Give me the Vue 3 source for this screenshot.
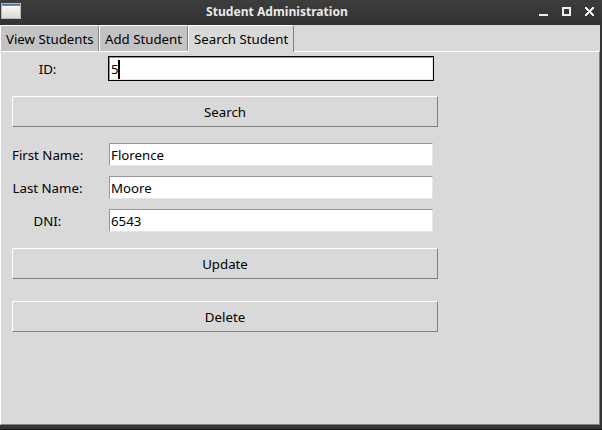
<script setup>
import { ref } from 'vue'

const tabs = [
  { id: 'view', label: 'View Students' },
  { id: 'add', label: 'Add Student' },
  { id: 'search', label: 'Search Student' },
]
const active = ref('search')
const id = ref('5')
const fields = ref([
  { label: 'First Name:', value: 'Florence' },
  { label: 'Last Name:', value: 'Moore' },
  { label: 'DNI:', value: '6543' },
])
</script>

<template>
  <div class="window">
    <header class="titlebar">
      <svg class="app-icon" width="20" height="16" viewBox="0 0 20 16" shape-rendering="crispEdges">
        <defs>
          <linearGradient id="sheet" x1="0" y1="0" x2="0" y2="1">
            <stop offset="0" stop-color="#fdfdfd" />
            <stop offset="1" stop-color="#d9dbd5" />
          </linearGradient>
        </defs>
        <rect width="20" height="16" fill="#b9bbb6" />
        <rect x="1" y="1" width="18" height="14" fill="url(#sheet)" />
        <rect x="1" y="1" width="18" height="1" fill="#4a6ea6" />
        <rect x="1" y="2" width="18" height="1" fill="#6a8cc0" />
      </svg>
      <h1 class="title">Student Administration</h1>
      <div class="controls">
        <svg width="9" height="9" viewBox="0 0 9 9" shape-rendering="crispEdges"><path d="M0 7h9v2H0z" fill="#eee" /></svg>
        <svg width="9" height="9" viewBox="0 0 9 9" shape-rendering="crispEdges"><path d="M1 1h7v7H1z" fill="none" stroke="#eee" stroke-width="2" /></svg>
        <svg width="9" height="9" viewBox="0 0 9 9" shape-rendering="crispEdges"><path d="M0 0h2v1h1v1h1v1h1V2h1V1h1V0h2v2H8v1H7v1H6v1h1v1h1v1h1v2H7V8H6V7H5V6H4v1H3v1H2v1H0V7h1V6h1V5h1V4H2V3H1V2H0z" fill="#eee" /></svg>
      </div>
    </header>

    <main class="body">
      <nav class="tabs">
        <button
          v-for="t in tabs"
          :key="t.id"
          :class="['tab', t.id, { active: t.id === active }]"
          @click="active = t.id"
        >{{ t.label }}</button>
      </nav>

      <section class="pane">
        <div class="row id-row">
          <span class="label">ID:</span>
          <div class="entry focused">{{ id }}<i class="caret"></i></div>
        </div>
        <button class="action search-btn">Search</button>
        <div class="details">
          <div v-for="f in fields" :key="f.label" class="row">
            <span class="label">{{ f.label }}</span>
            <div class="entry">{{ f.value }}</div>
          </div>
        </div>
        <button class="action update-btn">Update</button>
        <button class="action delete-btn">Delete</button>
      </section>
    </main>
  </div>
</template>

<style>
body {
  margin: 0;
  overflow: hidden;
}
</style>

<style scoped>
.window {
  box-sizing: border-box;
  display: flex;
  flex-direction: column;
  width: 602px;
  height: 430px;
  padding: 0 2px 4px 0;
  border-bottom: 1px solid #141214;
  background: #333434;
  font: 13.25px/18px "Noto Sans", sans-serif;
  color: #000;
}
.titlebar {
  display: flex;
  align-items: flex-start;
  flex: none;
  height: 25px;
  margin-right: -2px;
  background: linear-gradient(#3d3d3d, #323232);
}
.app-icon {
  margin: 3px 0 0 1px;
}
.title {
  flex: 1;
  margin: 3px 0 0;
  padding-right: 6px;
  font-size: 12.1px;
  line-height: 17px;
  font-weight: 700;
  text-align: center;
  color: #e8e8e8;
}
.controls {
  display: flex;
  gap: 14px;
  padding: 7px 8px 0 0;
}
.body {
  display: flex;
  flex: 1;
  flex-direction: column;
  background: #d9d9d9;
}
.tabs {
  display: flex;
  height: 26px;
}
.tab {
  box-sizing: border-box;
  height: 26px;
  padding: 0 0 0 5px;
  border: 1px solid #fff;
  border-right-color: #828282;
  border-bottom: 0;
  border-radius: 2px 3px 0 0;
  background: #c3c3c3;
  font: inherit;
  color: inherit;
  text-align: left;
  white-space: nowrap;
}
.tab.view {
  width: 99px;
}
.tab.add {
  width: 89px;
}
.tab.search {
  width: 106px;
}
.tab.active {
  z-index: 1;
  height: 27px;
  padding-bottom: 1px;
  background: #d9d9d9;
}
.pane {
  box-sizing: border-box;
  flex: 1;
  padding: 4px 0 0 11px;
  border: 1px solid #828282;
  border-top-color: #fff;
  border-left-color: #fff;
}
.row {
  display: flex;
  align-items: center;
  width: 422px;
}
.label {
  width: 71px;
  margin-right: 26px;
  text-align: center;
  white-space: nowrap;
}
.entry {
  box-sizing: border-box;
  display: flex;
  align-items: center;
  width: 324px;
  height: 23px;
  padding: 1px 0 0 1px;
  border: 1px solid #e6e6e6;
  border-top-color: #969696;
  border-left-color: #969696;
  background: #fff;
}
.id-row {
  height: 25px;
}
.focused {
  outline: 1px solid #000;
}
.caret {
  width: 2px;
  height: 19px;
  margin-left: -1px;
  background: #000;
}
.action {
  display: block;
  box-sizing: border-box;
  width: 426px;
  height: 31px;
  padding: 0;
  border: 1px solid #828282;
  border-top-color: #fff;
  border-left-color: #fff;
  background: #d9d9d9;
  font: inherit;
  color: inherit;
}
.search-btn {
  margin-top: 15px;
}
.details {
  display: flex;
  flex-direction: column;
  gap: 10px;
  margin: 16px 0;
}
.delete-btn {
  margin-top: 22px;
}
</style>
